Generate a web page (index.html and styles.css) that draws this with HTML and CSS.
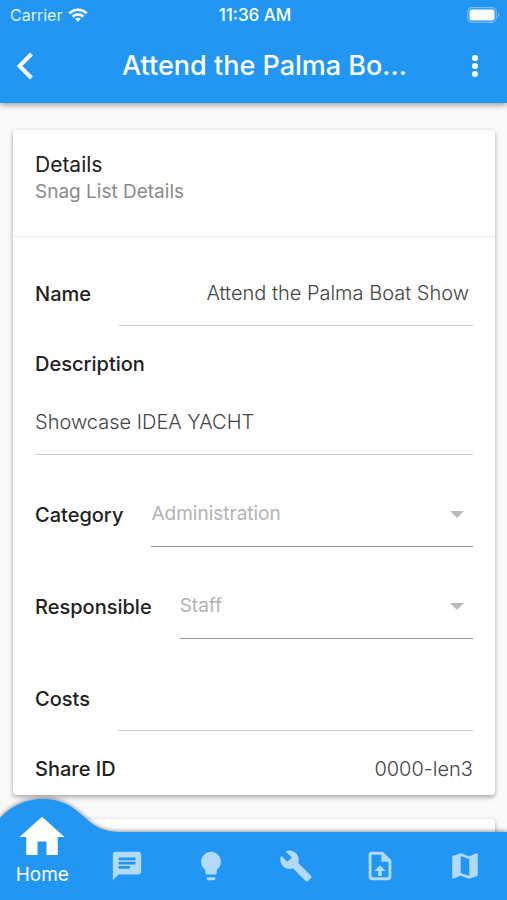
FILE: index.html
```html
<!DOCTYPE html>
<html lang="en">
<head>
    <meta charset="UTF-8">
    <meta name="viewport" content="width=device-width, initial-scale=1.0">
    <title>Snag List Details</title>
    <link rel="stylesheet" href="styles.css">
</head>
<body>
    <header class="top">
        <div class="status-bar">
            <span class="carrier">
                Carrier
                <svg width="20" height="16" viewBox="0 0 22 16" fill="none" stroke="#fff" stroke-width="3">
                    <path d="M1.500 6.200C7 0.900 15 0.900 20.500 6.200"/>
                    <path d="M5 9.800C8.500 6.500 13.500 6.500 17 9.800"/>
                    <path d="M11 15.500L7.800 12.200C9.600 10.500 12.400 10.500 14.200 12.200Z" fill="#fff" stroke="none"/>
                </svg>
            </span>
            <span class="clock">11:36 AM</span>
            <span class="battery">
                <svg width="33" height="16" viewBox="0 0 33 16">
                    <rect x="0.700" y="0.700" width="28.600" height="14.600" rx="4.500" fill="none" stroke="#fff" stroke-opacity="0.400" stroke-width="1.200"/>
                    <rect x="2.500" y="2.500" width="25" height="11" rx="2.500" fill="#fff"/>
                    <path d="M31 5.500c1.800 0.700 1.800 4.300 0 5z" fill="#fff" fill-opacity="0.400"/>
                </svg>
            </span>
        </div>
        <div class="app-bar">
            <button class="icon-button" type="button" aria-label="Back">
                <svg width="18" height="28" viewBox="0 0 18 28" fill="none" stroke="#fff" stroke-width="4">
                    <path d="M15.500 2L3.500 14L15.500 26"/>
                </svg>
            </button>
            <h1>Attend the Palma Bo...</h1>
            <button class="icon-button" type="button" aria-label="More">
                <svg width="8" height="24" viewBox="0 0 8 24" fill="#fff">
                    <circle cx="4" cy="4" r="3"/>
                    <circle cx="4" cy="12" r="3"/>
                    <circle cx="4" cy="20" r="3"/>
                </svg>
            </button>
        </div>
    </header>

    <main class="content">
        <section class="card">
            <div class="card-header">
                <h2>Details</h2>
                <p>Snag List Details</p>
            </div>
            <form class="card-body">
                <div class="row">
                    <label for="name">Name</label>
                    <input class="field field-right" type="text" id="name" value="Attend the Palma Boat Show">
                </div>
                <div class="row row-stacked">
                    <label for="description">Description</label>
                    <input class="field" type="text" id="description" value="Showcase IDEA YACHT">
                </div>
                <div class="row row-spaced">
                    <label for="category">Category</label>
                    <div class="select-box">
                        <select class="field" id="category">
                            <option>Administration</option>
                        </select>
                        <svg width="14" height="7" viewBox="0 0 14 7"><path d="M0 0H14L7 7Z" fill="#bababa"/></svg>
                    </div>
                </div>
                <div class="row row-spaced">
                    <label for="responsible">Responsible</label>
                    <div class="select-box">
                        <select class="field" id="responsible">
                            <option>Staff</option>
                        </select>
                        <svg width="14" height="7" viewBox="0 0 14 7"><path d="M0 0H14L7 7Z" fill="#bababa"/></svg>
                    </div>
                </div>
                <div class="row row-spaced">
                    <label for="costs">Costs</label>
                    <input class="field field-right" type="text" id="costs">
                </div>
                <div class="row row-share">
                    <label for="share">Share ID</label>
                    <output id="share">0000-len3</output>
                </div>
            </form>
        </section>
        <section class="card card-next"></section>
    </main>

    <nav class="tabs">
        <a class="tab tab-active" href="#home">
            <svg class="bump" width="125" height="36" viewBox="0 0 125 36">
                <path d="M0 20C12 7 27 1 43 1C60 1 73 8 83 18C95 29 104 34 120 34V36H0Z" fill="#2196f3"/>
            </svg>
            <svg class="home-icon" width="54" height="54" viewBox="0 0 24 24"><path d="M10 20v-6h4v6h5v-8h3L12 3 2 12h3v8z"/></svg>
            <span>Home</span>
        </a>
        <a class="tab" href="#messages" aria-label="Messages">
            <svg width="34" height="34" viewBox="0 0 24 24"><path d="M20 2H4c-1.100 0-1.990.9-1.990 2L2 22l4-4h14c1.100 0 2-.9 2-2V4c0-1.100-.9-2-2-2zM6 9h12v2H6V9zm8 5H6v-2h8v2zm4-6H6V6h12v2z"/></svg>
        </a>
        <a class="tab" href="#ideas" aria-label="Ideas">
            <svg width="34" height="34" viewBox="0 0 24 24"><path d="M9 21c0 .55.45 1 1 1h4c.55 0 1-.45 1-1v-1H9v1zm3-19C8.140 2 5 5.140 5 9c0 2.380 1.190 4.470 3 5.740V17c0 .55.45 1 1 1h6c.55 0 1-.45 1-1v-2.260c1.810-1.270 3-3.360 3-5.740 0-3.860-3.140-7-7-7z"/></svg>
        </a>
        <a class="tab" href="#tools" aria-label="Tools">
            <svg width="34" height="34" viewBox="0 0 24 24"><path d="M22.700 19l-9.100-9.100c.9-2.300.4-5-1.500-6.900-2-2-5-2.400-7.400-1.300L9 6 6 9 1.600 4.700C.4 7.100.9 10.100 2.900 12.100c1.900 1.900 4.600 2.400 6.900 1.500l9.100 9.100c.4.400 1 .4 1.400 0l2.300-2.300c.5-.4.5-1.100.1-1.400z"/></svg>
        </a>
        <a class="tab" href="#upload" aria-label="Upload">
            <svg width="34" height="34" viewBox="0 0 24 24"><path fill-rule="evenodd" d="M14 2H6c-1.100 0-2 .9-2 2v16c0 1.100.9 2 2 2h12c1.100 0 2-.9 2-2V8l-6-6zm4 18H6V4h7v5h5v11zM8 15.500h2.700V19h2.600v-3.500H16L12 11.500z"/></svg>
        </a>
        <a class="tab" href="#map" aria-label="Map">
            <svg width="34" height="34" viewBox="0 0 24 24"><path d="M20.500 3l-.16.030L15 5.100 9 3 3.360 4.900c-.21.070-.36.250-.36.480V20.500c0 .28.220.5.500.5l.16-.030L9 18.900l6 2.100 5.640-1.900c.21-.07.360-.25.360-.48V3.500c0-.28-.22-.5-.5-.5zM15 19l-6-2.110V5l6 2.110V19z"/></svg>
        </a>
    </nav>
</body>
</html>
```

FILE: styles.css
```css
* {
    box-sizing: border-box;
}

body {
    font-family: Inter, "Liberation Sans", sans-serif;
    font-size: 20px;
    line-height: 28px;
    margin: 0;
    height: 100vh;
    display: flex;
    flex-direction: column;
    background-color: #fafafa;
    color: #212121;
}

h1, h2, p {
    margin: 0;
}

svg {
    display: block;
}

.top {
    background-color: #2196f3;
    color: #fff;
    box-shadow: 0 2px 6px rgba(0, 0, 0, 0.4);
    z-index: 1;
}

.status-bar {
    display: grid;
    grid-template-columns: 1fr auto 1fr;
    align-items: center;
    height: 30px;
    padding: 0 7px 0 10px;
    font-size: 16px;
}

.carrier {
    display: flex;
    align-items: center;
    gap: 6px;
    color: #e3f2fd;
}

.clock {
    font-size: 17px;
    font-weight: 500;
}

.battery {
    justify-self: end;
}

.app-bar {
    display: flex;
    align-items: center;
    height: 73px;
    padding: 0 28px 2px 16px;
}

.icon-button {
    background: none;
    border: none;
    padding: 0;
    cursor: pointer;
}

.app-bar h1 {
    flex: 1;
    padding-left: 24px;
    font-size: 27px;
    line-height: 36px;
    font-weight: 500;
    text-align: center;
    white-space: nowrap;
}

.content {
    flex: 1;
    min-height: 0;
    overflow: hidden;
    padding: 27px 12px 0 13px;
}

.card {
    background-color: #fff;
    border-radius: 4px;
    box-shadow: 0 2px 5px rgba(0, 0, 0, 0.35);
}

.card-next {
    margin-top: 24px;
    height: 120px;
}

.card-header {
    padding: 21px 22px 31px;
    line-height: 27px;
    border-bottom: 1px solid #eee;
}

.card-header h2 {
    font-size: 21px;
    font-weight: 400;
}

.card-header p {
    font-size: 19px;
    color: #8a8a8a;
}

.card-body {
    padding: 24px 22px 12px;
}

.row {
    display: flex;
    align-items: center;
    gap: 28px;
}

.row-stacked {
    flex-direction: column;
    align-items: stretch;
    gap: 12px;
    margin-top: 24px;
}

.row-spaced {
    margin-top: 27px;
}

.row-share {
    justify-content: space-between;
    margin-top: 24px;
}

label {
    font-weight: 500;
}

output {
    font-weight: 300;
    color: #444;
}

.field {
    flex: 1;
    width: 100%;
    min-width: 0;
    min-height: 65px;
    padding: 0;
    border: none;
    border-bottom: 1px solid #ccc;
    border-radius: 0;
    background: none;
    outline: none;
    font: inherit;
    font-weight: 300;
    color: #444;
}

.field-right {
    padding-right: 4px;
    text-align: right;
}

.select-box {
    flex: 1;
    display: grid;
    align-items: center;
}

.select-box .field,
.select-box svg {
    grid-area: 1 / 1;
}

.select-box .field {
    appearance: none;
    border-bottom-color: #999;
    font-size: 19px;
    font-weight: 400;
    color: #b3b3b3;
}

.select-box svg {
    justify-self: end;
    margin-right: 9px;
    pointer-events: none;
}

.tabs {
    display: grid;
    grid-template-columns: repeat(6, 1fr);
    grid-template-rows: 100%;
    height: 68px;
    background-color: #2196f3;
    filter: drop-shadow(0 -1px 2px rgba(0, 0, 0, 0.4));
    z-index: 1;
}

.tab {
    display: flex;
    align-items: center;
    justify-content: center;
    color: #fff;
    text-decoration: none;
}

.tab svg {
    flex-shrink: 0;
    fill: rgba(255, 255, 255, 0.65);
}

.tab-active {
    position: relative;
    flex-direction: column;
    justify-content: flex-end;
    padding-bottom: 11px;
    font-size: 19px;
}

.tab-active .home-icon {
    position: relative;
    fill: #fff;
    margin-bottom: -3px;
}

/* raised part of the bar behind the active tab */
.bump {
    position: absolute;
    left: 0;
    top: -34px;
}
```
